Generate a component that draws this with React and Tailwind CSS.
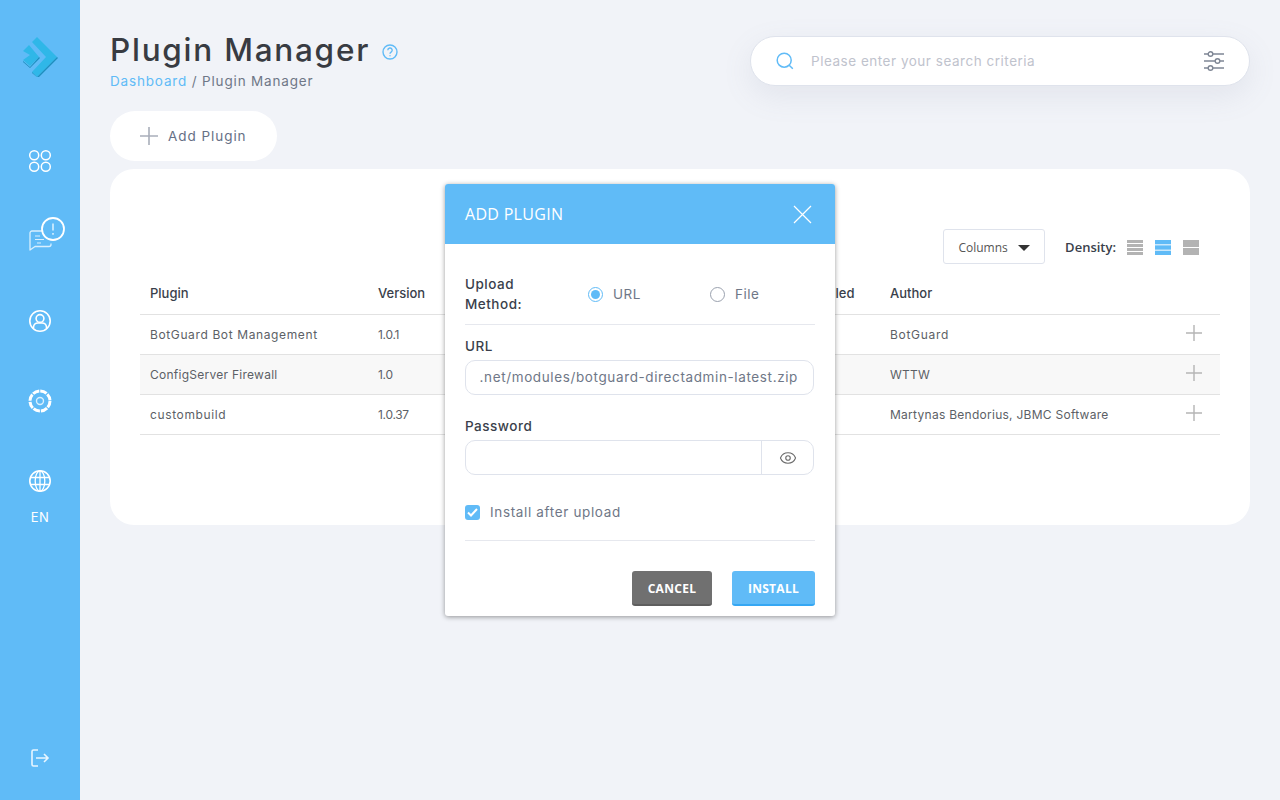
import React from 'react';
import { Eye } from 'lucide-react';

const mont = 'font-["Inter","Liberation_Sans",sans-serif]';

// tracking per cell, the reference font has other letter widths than Inter
const rows = [
  { plugin: 'BotGuard Bot Management', pluginTrack: 'tracking-[0.62px]', version: '1.0.1', author: 'BotGuard', authorTrack: 'tracking-[0.7px]', bg: 'bg-white' },
  { plugin: 'ConfigServer Firewall', pluginTrack: 'tracking-[0.26px]', version: '1.0', author: 'WTTW', authorTrack: 'tracking-[0.2px]', bg: 'bg-[#f8f8f8]' },
  { plugin: 'custombuild', pluginTrack: 'tracking-[0.63px]', version: '1.0.37', author: 'Martynas Bendorius, JBMC Software', authorTrack: 'tracking-[0.27px]', bg: 'bg-white' },
];

const ThinPlus = ({ size = 18, color = '#b5b5b5' }) => (
  <svg width={size} height={size} viewBox="0 0 18 18" fill="none" stroke={color} strokeWidth="1.6">
    <path d="M9 0v18M0 9h18" />
  </svg>
);

const Logo = () => (
  <svg width="38" height="42" viewBox="0 0 38 42">
    <path d="M11 7l5-5 20 20-20 20-5-5 14-15z" fill="#2fb7e8" />
    <path d="M36 22l1 1-20 20-6-5v-1l5 5z" fill="#1d8fbf" />
    <path d="M2 16l6-6 10 12-9 9-7-6 7-5z" fill="#2fb7e8" />
    <path d="M18 22l1 1-10 10-7-6v-1l7 6z" fill="#1d8fbf" />
  </svg>
);

const AppsIcon = () => (
  <svg width="24" height="24" viewBox="0 0 24 24" fill="none" stroke="white" strokeWidth="1.5">
    <circle cx="6.2" cy="6.2" r="4.5" />
    <circle cx="17.8" cy="6.2" r="4.5" />
    <circle cx="6.2" cy="17.8" r="4.5" />
    <circle cx="17.8" cy="17.8" r="4.5" />
  </svg>
);

const ChatIcon = () => (
  <svg width="38" height="36" viewBox="0 0 38 36" fill="none">
    <path d="M14 14H4a2 2 0 0 0-2 2v17l5-3.5h14a2 2 0 0 0 2-2v-1" stroke="#d9f0fe" strokeWidth="1.3" strokeLinejoin="round" />
    <path d="M7 19h5M7 22.5h9M9 26h4" stroke="#d9f0fe" strokeWidth="1" />
    <circle cx="25" cy="12" r="11" fill="#60bbf7" stroke="white" strokeWidth="1.8" />
    <path d="M25 6.5v7" stroke="#d9f0fe" strokeWidth="1.6" />
    <path d="M25 16v1.8" stroke="#d9f0fe" strokeWidth="1.6" />
  </svg>
);

const UserIcon = () => (
  <svg width="24" height="24" viewBox="0 0 24 24" fill="none" stroke="white" strokeWidth="1.6">
    <circle cx="12" cy="12" r="10.2" />
    <circle cx="12" cy="9.5" r="3.9" />
    <path d="M5.5 19.5v-1.5a4.5 4.5 0 0 1 4.5-4h4a4.5 4.5 0 0 1 4.5 4v1.5" />
  </svg>
);

const GearIcon = () => (
  <svg width="26" height="26" viewBox="0 0 26 26" fill="none">
    <circle cx="13" cy="13" r="10" stroke="white" strokeWidth="3" strokeDasharray="6.85 1" />
    <circle cx="13" cy="13" r="3.5" stroke="#d9f0fe" strokeWidth="1.4" />
  </svg>
);

const GlobeIcon = () => (
  <svg width="24" height="24" viewBox="0 0 24 24" fill="none" stroke="white" strokeWidth="1.3">
    <circle cx="12" cy="12" r="10.2" strokeWidth="1.6" />
    <ellipse cx="12" cy="12" rx="4.8" ry="10.2" />
    <path d="M12 2v20M2.2 8.5h19.6M2.2 15.5h19.6" />
  </svg>
);

const LogoutIcon = () => (
  <svg width="20" height="20" viewBox="0 0 20 20" fill="none" stroke="#e8f6ff" strokeWidth="1.6">
    <path d="M8 2H3.5A1.5 1.5 0 0 0 2 3.5v13A1.5 1.5 0 0 0 3.5 18H8" />
    <path d="M6 10h12M14 6l4 4-4 4" />
  </svg>
);

const SlidersIcon = () => (
  <svg width="20" height="20" viewBox="0 0 20 20" fill="none" stroke="#7f8795" strokeWidth="1.4">
    <path d="M0 3h4M9 3h11M0 10h11M16 10h4M0 17h4M9 17h11" />
    <circle cx="6.5" cy="3" r="2.3" />
    <circle cx="13.5" cy="10" r="2.3" />
    <circle cx="6.5" cy="17" r="2.3" />
  </svg>
);

const Density = ({ bars, color }) => {
  const gap = 1;
  const h = (15 - gap * (bars - 1)) / bars;
  return (
    <svg width="16" height="15" viewBox="0 0 16 15">
      {Array.from({ length: bars }).map((_, i) => (
        <rect key={i} x="0" y={i * (h + gap)} width="16" height={h} fill={color} />
      ))}
    </svg>
  );
};

const Sidebar = () => (
  <aside className="w-20 h-full shrink-0 bg-[#60bbf7] flex flex-col items-center">
    <div className="h-[42px] mt-[35px]"><Logo /></div>
    <div className="mt-[72px] h-6"><AppsIcon /></div>
    <div className="mt-[44px] h-9 w-6 flex justify-start"><div className="shrink-0"><ChatIcon /></div></div>
    <div className="mt-[56px] h-6"><UserIcon /></div>
    <div className="mt-[55px] h-[26px]"><GearIcon /></div>
    <div className="mt-[55px] h-6"><GlobeIcon /></div>
    <div className={`mt-[16px] text-[13px] leading-4 text-white tracking-[0.5px] ${mont}`}>EN</div>
    <div className="mt-auto mb-[32px] h-5"><LogoutIcon /></div>
  </aside>
);

const Modal = () => (
  <div className={`absolute left-[445px] top-[184px] w-[390px] h-[432px] bg-white rounded-[3px] shadow-[0_1px_5px_rgba(0,0,0,0.4)] ${mont}`}>
    <div className="h-[60px] bg-[#60bbf7] rounded-t-[3px] flex items-center justify-between pl-5 pr-[23px]">
      <span className='text-white text-base font-["Open_Sans",sans-serif] font-medium tracking-[0.3px]'>ADD PLUGIN</span>
      <svg width="19" height="19" viewBox="0 0 19 19" fill="none" stroke="white" strokeWidth="1.2">
        <path d="M1 1l17 17M18 1L1 18" />
      </svg>
    </div>
    <div className="px-5">
      <div className="flex items-center h-[81px] pt-[21px] border-b border-[#e6e8ee]">
        <div className="w-[123px] mb-[2px] text-[13.5px] leading-5 font-medium text-[#3a3f4b] tracking-[0.5px]">Upload<br />Method:</div>
        <div className="w-[122px] flex items-center gap-[10px] text-[13.5px] text-[#6f7787] tracking-[0.5px]">
          <span className="w-[15px] h-[15px] rounded-full border border-[#60bbf7] flex items-center justify-center">
            <span className="w-[9px] h-[9px] rounded-full bg-[#60bbf7]" />
          </span>
          URL
        </div>
        <div className="flex items-center gap-[10px] text-[13.5px] text-[#6f7787] tracking-[0.5px]">
          <span className="w-[15px] h-[15px] rounded-full border border-[#9aa1ae]" />
          File
        </div>
      </div>
      <div className="mt-[13px] text-[13.5px] leading-4 font-medium text-[#3a3f4b] tracking-[0.5px]">URL</div>
      <div className="mt-[6px] mr-[1px] h-[35px] rounded-[10px] border border-[#dfe3ec] flex items-center justify-end px-[15px] text-[13.5px] text-[#6f7787] tracking-[0.62px] whitespace-nowrap overflow-hidden">
        .net/modules/botguard-directadmin-latest.zip
      </div>
      <div className="mt-[23px] text-[13.5px] leading-4 font-medium text-[#3a3f4b] tracking-[0.5px]">Password</div>
      <div className="mt-[6px] mr-[1px] h-[35px] rounded-[10px] border border-[#dfe3ec] flex">
        <div className="w-[296px] border-r border-[#dfe3ec]" />
        <div className="flex-1 flex items-center justify-center text-[#6b6b6b]"><Eye size={18} strokeWidth={1.5} /></div>
      </div>
      <div className="mt-[30px] flex items-center gap-[10px] text-[13.5px] text-[#6f7787] tracking-[0.65px] h-[15px]">
        <span className="w-[15px] h-[15px] rounded-[3px] bg-[#60bbf7] flex items-center justify-center">
          <svg width="11" height="9" viewBox="0 0 11 9" fill="none" stroke="white" strokeWidth="2"><path d="M1 4.5l3 3 6-6.5" /></svg>
        </span>
        Install after upload
      </div>
      <div className="mt-[20px] border-b border-[#e6e8ee]" />
      <div className='mt-[30px] flex justify-end gap-5 font-["Open_Sans",sans-serif] text-xs font-bold text-white tracking-[0.3px]'>
        <button className="w-20 h-[35px] pt-[2px] rounded-[3px] bg-[#707070] border-b-2 border-[#5e5e5e]">CANCEL</button>
        <button className="w-[83px] h-[35px] pt-[2px] rounded-[3px] bg-[#60bbf7] border-b-2 border-[#35a7f3]">INSTALL</button>
      </div>
    </div>
  </div>
);

const App = () => (
  <div className={`relative w-[1280px] h-[800px] overflow-hidden flex bg-[#f1f3f8] ${mont}`}>
    <Sidebar />
    <main className="flex-1 pl-[30px] pr-[30px]">
      <div className="flex justify-between h-[111px]">
        <div className="pt-[30px]">
          <div className="flex items-center gap-[12px]">
            <h1 className="text-[31.5px] leading-10 font-medium text-[#383b42] tracking-[1.75px]">Plugin Manager</h1>
            <svg className="mt-1" width="16" height="16" viewBox="0 0 16 16" fill="none" stroke="#60bbf7" strokeWidth="1.4">
              <circle cx="8" cy="8" r="7" />
              <path d="M5.8 6.2a2.2 2.2 0 1 1 3.3 1.9c-.7.4-1.1.8-1.1 1.6M8 11.2v1" />
            </svg>
          </div>
          <div className="mt-[1px] text-[13.5px] leading-5 tracking-[0.83px] text-[#6f7787]">
            <span className="text-[#60bbf7]">Dashboard</span> / Plugin Manager
          </div>
        </div>
        <div className="mt-9 w-[500px] h-[50px] bg-white rounded-[25px] border border-[#dfe3ec] shadow-[0_10px_30px_rgba(120,130,160,0.12)] flex items-center pl-[25px] pr-[25px]">
          <svg width="18" height="18" viewBox="0 0 18 18" fill="none" stroke="#60bbf7" strokeWidth="1.5">
            <circle cx="8.2" cy="8.2" r="7" />
            <path d="M13.2 13.2l3.6 3.6" />
          </svg>
          <span className="ml-[17px] text-[13.5px] text-[#bfc3cd] tracking-[0.52px]">Please enter your search criteria</span>
          <span className="ml-auto"><SlidersIcon /></span>
        </div>
      </div>

      <button className="w-[167px] h-[50px] bg-white rounded-[25px] flex items-center pl-[30px] gap-[10px] text-[13.5px] text-[#667085] tracking-[0.95px]">
        <ThinPlus color="#a9aeba" />
        Add Plugin
      </button>

      <section className="mt-2 h-[356px] bg-white rounded-[24px] px-[30px]">
        <div className="h-[104px] pt-[60px] flex justify-end pr-[21px]">
          <div className='w-[102px] h-[35px] pt-[2px] rounded-[3px] border border-[#dfe3ec] flex items-center justify-center gap-[10px] text-xs text-[#555] font-["Open_Sans",sans-serif]'>
            Columns
            <svg width="12" height="6" viewBox="0 0 12 6"><path d="M0 0h12L6 6z" fill="#333" /></svg>
          </div>
          <div className='ml-5 h-[35px] pt-[2px] flex items-center text-[13px] font-semibold text-[#3a3f4b] font-["Open_Sans",sans-serif]'>Density:</div>
          <div className="ml-[11px] h-[35px] pt-[2px] flex items-center gap-3">
            <Density bars={4} color="#b3b3b3" />
            <Density bars={3} color="#60bbf7" />
            <Density bars={2} color="#b3b3b3" />
          </div>
        </div>
        <div className="grid grid-cols-[228px_424px_88px_280px_60px] h-[42px] items-center border-b border-[#e2e2e2] text-[13px] font-medium text-[#3a3f4b]">
          <div className="px-[10px]">Plugin</div>
          <div className="px-[10px]">Version</div>
          <div className="px-[10px]">Installed</div>
          <div className="px-[10px]">Author</div>
          <div />
        </div>
        {rows.map(row => (
          <div key={row.plugin} className={`grid grid-cols-[228px_424px_88px_280px_60px] h-10 items-center border-b border-[#e2e2e2] text-xs text-[#5c5f66] ${row.bg}`}>
            <div className={`px-[10px] whitespace-nowrap ${row.pluginTrack}`}>{row.plugin}</div>
            <div className="px-[10px] tracking-[-0.3px]">{row.version}</div>
            <div />
            <div className={`px-[10px] whitespace-nowrap ${row.authorTrack}`}>{row.author}</div>
            <div className="flex justify-end pr-[18px] -mt-1"><ThinPlus size={16} /></div>
          </div>
        ))}
      </section>
    </main>
    <Modal />
  </div>
);

export default App;
